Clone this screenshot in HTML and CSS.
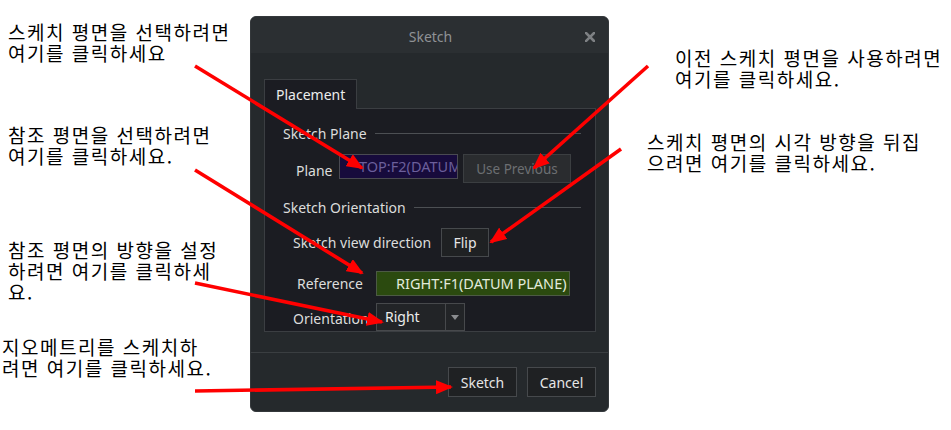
FILE: index.html
```html
<!DOCTYPE html>
<html lang="ko">
<head>
    <meta charset="UTF-8">
    <meta name="viewport" content="width=device-width, initial-scale=1.0">
    <title>Sketch Dialog</title>
    <link rel="stylesheet" href="styles.css">
</head>
<body>

    <div class="page">
        <div class="notes notes-left">
            <p class="note note-plane">스케치 평면을 선택하려면<br>여기를 클릭하세요</p>
            <p class="note note-ref">참조 평면을 선택하려면<br>여기를 클릭하세요.</p>
            <p class="note note-orient">참조 평면의 방향을 설정<br>하려면 여기를 클릭하세<br>요.</p>
            <p class="note note-sketch">지오메트리를 스케치하<br>려면 여기를 클릭하세요.</p>
        </div>

        <div class="dialog">
            <div class="dialog-title">
                <span class="title-text">Sketch</span>
                <svg class="close-icon" width="10" height="10" viewBox="0 0 10 10">
                    <path d="M1 1 L9 9 M9 1 L1 9" stroke="#7d8083" stroke-width="2.6" stroke-linecap="square"/>
                </svg>
            </div>

            <div class="dialog-body">
                <div class="tab">Placement</div>
                <div class="panel">
                    <div class="group-title">Sketch Plane</div>
                    <div class="row row-plane">
                        <span class="label label-plane">Plane</span>
                        <div class="field field-plane">TOP:F2(DATUM PLANE)</div>
                        <button class="btn btn-disabled">Use Previous</button>
                    </div>

                    <div class="group-title">Sketch Orientation</div>
                    <div class="row row-flip">
                        <span class="label label-flip">Sketch view direction</span>
                        <button class="btn btn-flip">Flip</button>
                    </div>
                    <div class="row row-ref">
                        <span class="label label-ref">Reference</span>
                        <div class="field field-ref">RIGHT:F1(DATUM PLANE)</div>
                    </div>
                    <div class="row row-orient">
                        <span class="label label-orient">Orientation</span>
                        <div class="dropdown">
                            <span class="dropdown-value">Right</span>
                            <span class="dropdown-arrow"></span>
                        </div>
                    </div>
                </div>
            </div>

            <div class="dialog-footer">
                <button class="btn btn-footer">Sketch</button>
                <button class="btn btn-footer">Cancel</button>
            </div>
        </div>

        <div class="notes notes-right">
            <p class="note note-prev">이전 스케치 평면을 사용하려면<br>여기를 클릭하세요.</p>
            <p class="note note-flip">스케치 평면의 시각 방향을 뒤집<br>으려면 여기를 클릭하세요.</p>
        </div>

        <!-- callout arrows drawn over everything -->
        <svg class="arrows" width="951" height="430" viewBox="0 0 951 430">
            <defs>
                <marker id="head" markerUnits="userSpaceOnUse" markerWidth="17" markerHeight="14" refX="15" refY="7" orient="auto">
                    <path d="M0 0 L17 7 L0 14 Z" fill="#ff0000"/>
                </marker>
            </defs>
            <g stroke="#ff0000" stroke-width="3.6" marker-end="url(#head)">
                <line x1="195" y1="66" x2="362" y2="168"/>
                <line x1="648" y1="66" x2="534" y2="168"/>
                <line x1="195" y1="170" x2="362" y2="273"/>
                <line x1="621" y1="149" x2="491" y2="242"/>
                <line x1="195" y1="283" x2="382" y2="322"/>
                <line x1="195" y1="391" x2="451" y2="387"/>
            </g>
        </svg>
    </div>

</body>
</html>
```

FILE: styles.css
```css
body {
    margin: 0;
    background-color: #ffffff;
    font-family: "Noto Sans", "Liberation Sans", sans-serif;
}
.page {
    position: relative;
    display: flex;
    width: 951px;
    height: 430px;
    overflow: hidden;
}

/* annotations */
.notes {
    font-family: "Noto Sans CJK KR", "Noto Sans", sans-serif;
    font-size: 19px;
    line-height: 21px;
    letter-spacing: 1.5px;
    color: #000000;
}
.note {
    margin: 0;
    white-space: nowrap;
}
.notes-left {
    width: 250px;
    padding-left: 8px;
    box-sizing: border-box;
}
.note-plane {
    margin-top: 21px;
}
.note-ref {
    margin-top: 61px;
}
.note-orient {
    margin-top: 73px;
}
.note-sketch {
    margin-top: 34px;
    margin-left: -6px;
}
.notes-right {
    flex: 1;
}
.note-prev {
    margin-top: 47px;
    margin-left: 66px;
}
.note-flip {
    margin-top: 42px;
    margin-left: 38px;
}

/* dialog */
.dialog {
    width: 359px;
    height: 396px;
    margin-top: 16px;
    box-sizing: border-box;
    background-color: #25292c;
    border: 1px solid #34383b;
    border-radius: 6px;
    overflow: hidden;
    color: #e4e4e4;
    font-size: 14px;
}
.dialog-title {
    display: grid;
    grid-template-columns: 1fr auto 1fr;
    align-items: center;
    height: 36px;
    background-color: #2b2f32;
}
.title-text {
    grid-column: 2;
    color: #8f9295;
    font-size: 14px;
    padding: 3px 0 0 2px;
}
.close-icon {
    grid-column: 3;
    justify-self: end;
    margin-right: 13px;
    margin-top: 3px;
}
.dialog-body {
    padding: 26px 12px 0 13px;
}
.tab {
    position: relative;
    width: 93px;
    height: 30px;
    box-sizing: border-box;
    margin-bottom: -1px;
    padding: 7px 0 0 11px;
    background-color: #1b1c22;
    border: 1px solid #3b3e42;
    border-bottom: none;
    color: #ececec;
    font-size: 14px;
    line-height: 16px;
}
.panel {
    height: 224px;
    box-sizing: border-box;
    padding: 14px 14px 0 0;
    background-color: #1b1c22;
    border: 1px solid #3b3e42;
}
.group-title {
    display: flex;
    align-items: center;
    height: 20px;
    padding-left: 18px;
    color: #dcdcdc;
}
.group-title::after {
    content: "";
    flex: 1;
    height: 1px;
    margin-left: 8px;
    background-color: #4c4f53;
}
.row {
    display: flex;
    align-items: center;
    color: #dcdcdc;
}
.label {
    white-space: nowrap;
}
.row-plane {
    align-items: flex-start;
    margin-top: 11px;
    margin-bottom: 14px;
    padding-left: 31px;
}
.label-plane {
    width: 43px;
    align-self: center;
    padding-top: 3px;
}
.row-flip {
    margin-top: 11px;
    padding-left: 28px;
}
.label-flip {
    width: 148px;
}
.row-ref {
    margin-top: 14px;
    padding-left: 32px;
}
.label-ref {
    width: 79px;
}
.row-orient {
    margin-top: 7px;
    padding-left: 28px;
}
.label-orient {
    width: 83px;
    padding-top: 2px;
}

.field {
    height: 25px;
    box-sizing: border-box;
    padding-left: 19px;
    font-size: 14.5px;
    line-height: 23px;
    white-space: nowrap;
    overflow: hidden;
}
.field-plane {
    width: 119px;
    background-color: #170b3c;
    border: 1px solid #4a4a52;
    color: #6b5f9b;
}
.field-ref {
    width: 194px;
    background-color: #2b4a0f;
    border: 1px solid #4c5a44;
    color: #e2ebdc;
}

.btn {
    height: 29px;
    box-sizing: border-box;
    padding: 0;
    font-family: inherit;
    font-size: 14px;
    background-color: #1f2123;
    border: 1px solid #46494c;
    color: #e6e6e6;
    cursor: pointer;
}
.btn-disabled {
    width: 108px;
    margin-left: 5px;
    font-size: 13.5px;
    background-color: #2a2c2f;
    border-color: #3b3e41;
    color: #6c6f72;
    cursor: default;
}
.btn-flip {
    width: 48px;
}

.dropdown {
    display: flex;
    width: 89px;
    height: 28px;
    box-sizing: border-box;
    background-color: #222427;
    border: 1px solid #47494c;
}
.dropdown-value {
    width: 69px;
    padding-left: 8px;
    box-sizing: border-box;
    line-height: 26px;
    border-right: 1px solid #47494c;
    color: #ececec;
    font-size: 14px;
}
.dropdown-arrow {
    flex: 1;
    display: flex;
    align-items: center;
    justify-content: center;
}
.dropdown-arrow::after {
    content: "";
    border-left: 4px solid transparent;
    border-right: 4px solid transparent;
    border-top: 5px solid #8a8c8f;
    margin-top: 1px;
}

.dialog-footer {
    display: flex;
    justify-content: flex-end;
    gap: 10px;
    margin-top: 20px;
    padding: 14px 12px 0 0;
    border-top: 1px solid #3a3e41;
}
.btn-footer {
    width: 69px;
    height: 30px;
    font-size: 14px;
}

/* overlay */
.arrows {
    position: absolute;
    top: 0;
    left: 0;
    pointer-events: none;
}
```
